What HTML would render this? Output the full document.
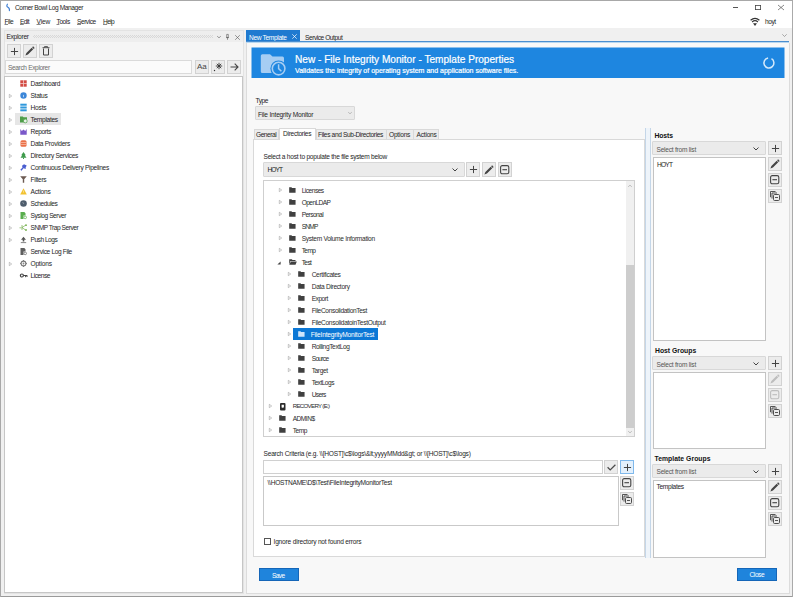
<!DOCTYPE html>
<html><head><meta charset="utf-8">
<style>
*{box-sizing:border-box;margin:0;padding:0}
html,body{width:793px;height:597px;overflow:hidden;background:#fff}
body{position:relative;font-family:"Liberation Sans",sans-serif;font-size:6.6px;letter-spacing:-0.3px;color:#1e1e1e}
.a{position:absolute}
.t{position:absolute;white-space:nowrap;line-height:12px;height:12px}
.btn{position:absolute;background:#ececec;border:1px solid #d2d2d2}
.box{position:absolute;background:#fff;border:1px solid #c9c9c9}
.combo{position:absolute;background:#ebebeb;border:1px solid #d8d8d8;border-radius:1px}
svg{position:absolute;overflow:visible}
</style></head><body>
<!-- window frame -->
<div class="a" style="left:0;top:0;width:793px;height:597px;border:1px solid #a8a8a8;border-right:1px solid #aaa"></div>
<!-- title -->
<svg style="left:0;top:0" width="14" height="14" viewBox="0 0 14 14"><path d="M7.4 4.2 Q6.2 6.2 7.6 7 Q9.9 8.2 9.4 10.6" fill="none" stroke="#3f7fd4" stroke-width="1.15" stroke-linecap="round"/></svg>
<div class="t" style="left:15.00px;top:2.35px;line-height:12px;letter-spacing:-0.391px">Corner Bowl Log Manager</div>
<!-- window controls -->
<div class="a" style="left:733px;top:7px;width:5px;height:1px;background:#555"></div>
<svg style="left:755px;top:5px" width="6" height="5" viewBox="0 0 6 5"><rect x="0.4" y="0.4" width="5.2" height="4.2" fill="none" stroke="#444" stroke-width="0.8"/></svg>
<svg style="left:778px;top:5px" width="6" height="6" viewBox="0 0 6 6"><path d="M0 0L6 5M6 0L0 5" stroke="#555" stroke-width="0.7"/></svg>
<!-- menu -->
<div class="t" style="left:4.50px;top:16.35px;letter-spacing:-0.465px"><u style="text-decoration-thickness:0.5px;text-underline-offset:0.4px;text-decoration-color:#888">F</u>ile</div>
<div class="t" style="left:20.00px;top:16.35px;letter-spacing:-0.633px"><u style="text-decoration-thickness:0.5px;text-underline-offset:0.4px;text-decoration-color:#888">E</u>dit</div>
<div class="t" style="left:36.50px;top:16.35px;letter-spacing:-0.135px"><u style="text-decoration-thickness:0.5px;text-underline-offset:0.4px;text-decoration-color:#888">V</u>iew</div>
<div class="t" style="left:56.50px;top:16.35px;letter-spacing:-0.425px"><u style="text-decoration-thickness:0.5px;text-underline-offset:0.4px;text-decoration-color:#888">T</u>ools</div>
<div class="t" style="left:77.00px;top:16.35px;letter-spacing:-0.467px"><u style="text-decoration-thickness:0.5px;text-underline-offset:0.4px;text-decoration-color:#888">S</u>ervice</div>
<div class="t" style="left:103.00px;top:16.35px;letter-spacing:-0.634px"><u style="text-decoration-thickness:0.5px;text-underline-offset:0.4px;text-decoration-color:#888">H</u>elp</div>
<!-- wifi -->
<svg style="left:750px;top:17px" width="10" height="9" viewBox="0 0 10 9"><path d="M0.6 3.3 Q5 -0.6 9.4 3.3" fill="none" stroke="#333" stroke-width="1.2"/><path d="M2.1 5 Q5 2.4 7.9 5" fill="none" stroke="#333" stroke-width="1.2"/><path d="M3 6.3 L7 6.3 L5 9Z" fill="#333"/></svg>
<div class="t" style="left:765.00px;top:16.35px;letter-spacing:-0.432px">hoyt</div>

<!-- app gray area -->
<div class="a" style="left:1px;top:28px;width:791px;height:568px;background:#f0f0f0"></div><div class="a" style="left:1px;top:596px;width:791px;height:1px;background:#9a9a9a"></div>

<!-- ===== Explorer panel ===== -->
<div class="a" style="left:4px;top:30px;width:240px;height:564px;background:#f5f5f5;border:1px solid #e3e3e3"></div>
<div class="a" style="left:5px;top:31px;width:238px;height:11px;background:#eeeeee"></div>
<div class="t" style="left:6.50px;top:30.95px;line-height:11px;height:11px;letter-spacing:-0.302px">Explorer</div>
<div class="a" style="left:33px;top:35px;width:180px;height:3px;background:repeating-conic-gradient(#d8d8d8 0 25%,transparent 0 50%) 0 0/2px 2px"></div>
<svg style="left:217px;top:36px" width="4" height="2" viewBox="0 0 4 2"><path d="M0.2 0.2 L2 1.8 L3.8 0.2" fill="none" stroke="#555" stroke-width="0.6"/></svg>
<svg style="left:226px;top:34px" width="3" height="6" viewBox="0 0 3 6"><path d="M0.7 0.4 H2.3 V3.5 H0.7Z M0 3.6 H3 M1.5 3.6 V5.8" fill="none" stroke="#555" stroke-width="0.6"/></svg>
<svg style="left:235px;top:34.5px" width="5" height="5" viewBox="0 0 5 5"><path d="M0.2 0.2L4.8 4.8M4.8 0.2L0.2 4.8" stroke="#555" stroke-width="0.6"/></svg>
<!-- toolbar buttons -->
<div class="btn" style="left:7.0px;top:44.0px;width:14.0px;height:14.0px;"></div><svg style="left:9.5px;top:46.5px" width="9" height="9" viewBox="0 0 9 9"><path d="M4.5 0.9V8.1M0.9 4.5H8.1" stroke="#444" stroke-width="1"/></svg>
<div class="btn" style="left:23.0px;top:44.0px;width:14.0px;height:14.0px;"></div><svg style="left:25.0px;top:46.0px" width="10" height="10" viewBox="0 0 10 10"><path d="M0.4 9.6 L1.39 7.05 L6.69 1.75 L8.25 3.31 L2.95 8.61 Z M7.12 1.32 L8.11 0.33 L9.67 1.89 L8.68 2.88 Z" fill="#444"/></svg>
<div class="btn" style="left:39px;top:44px;width:14px;height:14px"></div>
<svg style="left:42px;top:46px" width="8" height="10" viewBox="0 0 8 10"><path d="M0.5 1.7H7.5M2.5 1.5V0.6H5.5V1.5" fill="none" stroke="#444" stroke-width="0.9"/><path d="M1.5 2.5V9H6.5V2.5" fill="none" stroke="#444" stroke-width="1"/></svg>
<!-- search -->
<div class="box" style="left:5px;top:60px;width:187px;height:14px;border-color:#dadada;background:#fbfbfb"></div>
<div class="t" style="left:8.00px;top:62.40px;color:#6d6d6d;letter-spacing:-0.370px">Search Explorer</div>
<div class="btn" style="left:195px;top:60px;width:14px;height:14px"></div>
<div class="t" style="left:197px;top:61px;font-size:8px;letter-spacing:0;color:#444">Aa</div>
<div class="btn" style="left:211px;top:60px;width:14px;height:14px"></div>
<svg style="left:213px;top:62px" width="10" height="10" viewBox="0 0 10 10"><path d="M6 0.8V7.2M2.8 4H9.2M3.8 1.8L8.2 6.2M8.2 1.8L3.8 6.2" stroke="#333" stroke-width="0.9"/><circle cx="1.5" cy="8.5" r="0.7" fill="#333"/></svg>
<div class="btn" style="left:227px;top:60px;width:14px;height:14px"></div>
<svg style="left:230px;top:63px" width="9" height="8" viewBox="0 0 9 8"><path d="M0.5 4H8M4.7 0.7L8 4L4.7 7.3" fill="none" stroke="#444" stroke-width="1.1"/></svg>
<!-- explorer tree -->
<div class="box" style="left:4px;top:76px;width:239px;height:517px;border-color:#c6c6c6"></div>
<div class="a" style="left:15px;top:113px;width:46px;height:12px;background:#e6e6e6"></div>
<div class="t" style="left:30.50px;top:78.20px;letter-spacing:-0.300px">Dashboard</div><svg style="left:19.5px;top:80.0px" width="7" height="7" viewBox="0 0 7 7"><rect x="0.3" y="0.3" width="6.4" height="6.4" fill="#d24a43"/><path d="M3.5 0V7M0 3.5H7" stroke="#f3c9c6" stroke-width="0.8"/></svg><div class="t" style="left:30.50px;top:90.20px;letter-spacing:-0.300px">Status</div><svg style="left:9px;top:93.5px" width="3" height="4" viewBox="0 0 3 4"><path d="M0.3 0.3L2.7 2L0.3 3.7Z" fill="none" stroke="#999" stroke-width="0.55"/></svg><svg style="left:19.5px;top:92.0px" width="7" height="7" viewBox="0 0 7 7"><circle cx="3.5" cy="3.5" r="3.2" fill="#3c87d9"/><path d="M3.5 2.9V5.2" stroke="#cfe1f6" stroke-width="0.8"/></svg><div class="t" style="left:30.50px;top:102.20px;letter-spacing:-0.175px">Hosts</div><svg style="left:9px;top:105.5px" width="3" height="4" viewBox="0 0 3 4"><path d="M0.3 0.3L2.7 2L0.3 3.7Z" fill="none" stroke="#999" stroke-width="0.55"/></svg><svg style="left:19.5px;top:104.0px" width="7" height="7" viewBox="0 0 7 7"><rect x="0.3" y="-0.3" width="6.4" height="2" fill="#2f98dc"/><rect x="0.3" y="2.5" width="6.4" height="2" fill="#2f98dc"/><rect x="0.3" y="5.3" width="6.4" height="2" fill="#2f98dc"/></svg><div class="t" style="left:30.50px;top:114.20px;letter-spacing:-0.300px">Templates</div><svg style="left:9px;top:117.5px" width="3" height="4" viewBox="0 0 3 4"><path d="M0.3 0.3L2.7 2L0.3 3.7Z" fill="none" stroke="#999" stroke-width="0.55"/></svg><svg style="left:19.5px;top:116.0px" width="7" height="7" viewBox="0 0 7 7"><path d="M0 0.5H2.8L3.5 1.3H7V6.5H0Z" fill="#4f9e4a"/><circle cx="5.3" cy="5" r="1.9" fill="#e9f3e8" stroke="#4f9e4a" stroke-width="0.7"/></svg><div class="t" style="left:30.50px;top:126.20px;letter-spacing:-0.383px">Reports</div><svg style="left:9px;top:129.5px" width="3" height="4" viewBox="0 0 3 4"><path d="M0.3 0.3L2.7 2L0.3 3.7Z" fill="none" stroke="#999" stroke-width="0.55"/></svg><svg style="left:19.5px;top:128.0px" width="7" height="7" viewBox="0 0 7 7"><path d="M0.3 1V6.7H6.7V1L5.2 3L3.5 1.5L1.8 3Z" fill="#7a58c9"/></svg><div class="t" style="left:30.50px;top:138.20px;letter-spacing:-0.298px">Data Providers</div><svg style="left:9px;top:141.5px" width="3" height="4" viewBox="0 0 3 4"><path d="M0.3 0.3L2.7 2L0.3 3.7Z" fill="none" stroke="#999" stroke-width="0.55"/></svg><svg style="left:19.5px;top:140.0px" width="7" height="7" viewBox="0 0 7 7"><rect x="0.5" y="0.3" width="6" height="6.4" rx="1.5" fill="#ea7048"/><path d="M1 2.5H6M1 4.5H6" stroke="#fbd3c4" stroke-width="0.6"/></svg><div class="t" style="left:30.50px;top:150.20px;letter-spacing:-0.328px">Directory Services</div><svg style="left:9px;top:153.5px" width="3" height="4" viewBox="0 0 3 4"><path d="M0.3 0.3L2.7 2L0.3 3.7Z" fill="none" stroke="#999" stroke-width="0.55"/></svg><svg style="left:19.5px;top:152.0px" width="7" height="7" viewBox="0 0 7 7"><path d="M3.5 0L5.8 3.2H4.8L6.5 5.7H0.5L2.2 3.2H1.2Z" fill="#3f9b4c"/><rect x="3" y="5.5" width="1" height="1.5" fill="#3f9b4c"/></svg><div class="t" style="left:30.50px;top:162.20px;letter-spacing:-0.318px">Continuous Delivery Pipelines</div><svg style="left:9px;top:165.5px" width="3" height="4" viewBox="0 0 3 4"><path d="M0.3 0.3L2.7 2L0.3 3.7Z" fill="none" stroke="#999" stroke-width="0.55"/></svg><svg style="left:19.5px;top:164.0px" width="7" height="7" viewBox="0 0 7 7"><path d="M4 0.3L6.7 1.5L5.5 4L6 5L3.5 4.2L1.5 6.8L0.3 5.8L2.5 3.5L2 1.8Z" fill="#4a5ed0"/></svg><div class="t" style="left:30.50px;top:174.20px;letter-spacing:-0.299px">Filters</div><svg style="left:9px;top:177.5px" width="3" height="4" viewBox="0 0 3 4"><path d="M0.3 0.3L2.7 2L0.3 3.7Z" fill="none" stroke="#999" stroke-width="0.55"/></svg><svg style="left:19.5px;top:176.0px" width="7" height="7" viewBox="0 0 7 7"><path d="M0.2 0.3H6.8L4.2 3.3V6.8H2.8V3.3Z" fill="#6c5a52"/></svg><div class="t" style="left:30.50px;top:186.20px;letter-spacing:-0.217px">Actions</div><svg style="left:9px;top:189.5px" width="3" height="4" viewBox="0 0 3 4"><path d="M0.3 0.3L2.7 2L0.3 3.7Z" fill="none" stroke="#999" stroke-width="0.55"/></svg><svg style="left:19.5px;top:188.0px" width="7" height="7" viewBox="0 0 7 7"><path d="M3.5 0.3L6.8 6.6H0.2Z" fill="#f2c230"/><path d="M3.5 2.5V4.6" stroke="#fff4c8" stroke-width="0.6"/></svg><div class="t" style="left:30.50px;top:198.20px;letter-spacing:-0.425px">Schedules</div><svg style="left:9px;top:201.5px" width="3" height="4" viewBox="0 0 3 4"><path d="M0.3 0.3L2.7 2L0.3 3.7Z" fill="none" stroke="#999" stroke-width="0.55"/></svg><svg style="left:19.5px;top:200.0px" width="7" height="7" viewBox="0 0 7 7"><circle cx="3.5" cy="3.5" r="3.3" fill="#4e5d6c"/><path d="M2.8 2.3L3.7 3.7" stroke="#d8dde2" stroke-width="0.6"/></svg><div class="t" style="left:30.50px;top:210.20px;letter-spacing:-0.425px">Syslog Server</div><svg style="left:9px;top:213.5px" width="3" height="4" viewBox="0 0 3 4"><path d="M0.3 0.3L2.7 2L0.3 3.7Z" fill="none" stroke="#999" stroke-width="0.55"/></svg><svg style="left:19.5px;top:212.0px" width="7" height="7" viewBox="0 0 7 7"><path d="M0.5 0H4.3L5.5 1.2V3.6H0.5Z M0.5 3.5H3.5V7H0.5Z" fill="#5aae4e"/><circle cx="5.2" cy="5.4" r="1.3" fill="#fff" stroke="#5aae4e" stroke-width="0.7"/></svg><div class="t" style="left:30.50px;top:222.20px;letter-spacing:-0.468px">SNMP Trap Server</div><svg style="left:9px;top:225.5px" width="3" height="4" viewBox="0 0 3 4"><path d="M0.3 0.3L2.7 2L0.3 3.7Z" fill="none" stroke="#999" stroke-width="0.55"/></svg><svg style="left:19.5px;top:224.0px" width="7" height="7" viewBox="0 0 7 7"><path d="M-0.5 3.8H1.5M2 1V6M2 3.5L5.5 1.3M2 3.5L5.5 6" fill="none" stroke="#73ad4a" stroke-width="0.7"/><circle cx="6" cy="1.2" r="0.9" fill="#73ad4a"/><circle cx="6" cy="6" r="0.9" fill="#73ad4a"/></svg><div class="t" style="left:30.50px;top:234.20px;letter-spacing:-0.485px">Push Logs</div><svg style="left:9px;top:237.5px" width="3" height="4" viewBox="0 0 3 4"><path d="M0.3 0.3L2.7 2L0.3 3.7Z" fill="none" stroke="#999" stroke-width="0.55"/></svg><svg style="left:19.5px;top:236.0px" width="7" height="7" viewBox="0 0 7 7"><path d="M3.5 0.8L6 3.8H4.3V5.5H2.7V3.8H1Z" fill="#555"/><path d="M0.8 6.6H6.2" stroke="#555" stroke-width="0.7"/></svg><div class="t" style="left:30.50px;top:246.20px;letter-spacing:-0.367px">Service Log File</div><svg style="left:19.5px;top:248.0px" width="7" height="7" viewBox="0 0 7 7"><path d="M0.5 0H4.3L5.5 1.2V3.6H0.5Z M0.5 3.5H3.5V7H0.5Z" fill="#5f5f5f"/><circle cx="5.2" cy="5.4" r="1.3" fill="#fff" stroke="#5f5f5f" stroke-width="0.7"/></svg><div class="t" style="left:30.50px;top:258.20px;letter-spacing:-0.215px">Options</div><svg style="left:9px;top:261.5px" width="3" height="4" viewBox="0 0 3 4"><path d="M0.3 0.3L2.7 2L0.3 3.7Z" fill="none" stroke="#999" stroke-width="0.55"/></svg><svg style="left:19.5px;top:260.0px" width="7" height="7" viewBox="0 0 7 7"><circle cx="3.5" cy="3.5" r="2.4" fill="none" stroke="#777" stroke-width="1.1"/><circle cx="3.5" cy="3.5" r="0.9" fill="#888"/><path d="M3.5 0V1.2M3.5 5.8V7M0 3.5H1.2M5.8 3.5H7" stroke="#777" stroke-width="0.9"/></svg><div class="t" style="left:30.50px;top:270.20px;letter-spacing:-0.468px">License</div><svg style="left:19.5px;top:272.0px" width="7" height="7" viewBox="0 0 7 7"><circle cx="1.9" cy="3.5" r="1.5" fill="none" stroke="#444" stroke-width="1.2"/><path d="M3.4 3.5H7.2M5.6 3.5V5.2M7 3.5V5" stroke="#444" stroke-width="1" fill="none"/></svg>

<!-- ===== Document area ===== -->
<div class="a" style="left:246px;top:30px;width:54px;height:12px;background:#1f7ad0"></div>
<div class="t" style="left:249.00px;top:31.70px;color:#fff;line-height:12px;letter-spacing:-0.346px">New Template</div>
<svg style="left:292px;top:34px" width="5" height="5" viewBox="0 0 5 5"><path d="M0.3 0.3L4.7 4.7M4.7 0.3L0.3 4.7" stroke="#fff" stroke-width="0.7"/></svg>
<div class="t" style="left:305.00px;top:31.70px;line-height:12px;letter-spacing:-0.454px">Service Output</div>
<svg style="left:782px;top:34px" width="5" height="3" viewBox="0 0 5 3"><path d="M0.3 0.3 L2.5 2.5 L4.7 0.3" fill="none" stroke="#777" stroke-width="0.6"/></svg>
<div class="a" style="left:246px;top:41px;width:543px;height:1px;background:#4a8ed0"></div><div class="a" style="left:246px;top:42px;width:543px;height:1px;background:#b8d7f0"></div><div class="a" style="left:247px;top:43px;width:541px;height:2px;background:#f2f8fd"></div>
<div class="a" style="left:246px;top:43px;width:544px;height:551px;background:#f8f8f8;border:1px solid #dcdcdc;border-top:none"></div>
<!-- banner -->
<svg style="left:0;top:0" width="793" height="597"><rect x="251.5" y="47.5" width="533" height="30.5" fill="#1e86e0"/></svg>
<svg style="left:260px;top:53px" width="27" height="25" viewBox="0 0 27 25"><path d="M0.8 2.8 Q0.8 1.2 2.4 1.2 H10 L12.5 3.6 H22.5 Q24 3.6 24 5.2 V18.4 Q24 19.9 22.5 19.9 H2.3 Q0.8 19.9 0.8 18.4 Z" fill="#a6cdf3"/><circle cx="18.6" cy="15.6" r="8.2" fill="#1e86e0"/><circle cx="18.6" cy="15.6" r="6.3" fill="none" stroke="#a6cdf3" stroke-width="1.6"/><path d="M18.6 11.2V15.6L21.4 18.2" fill="none" stroke="#a6cdf3" stroke-width="1.5"/></svg>
<div class="t" style="left:295px;top:54px;font-size:10.1px;letter-spacing:0;color:#fff;-webkit-text-stroke:0.2px #fff;line-height:12px;height:12px">New - File Integrity Monitor - Template Properties</div>
<div class="t" style="left:295px;top:65px;font-size:7px;letter-spacing:0;color:#fff;-webkit-text-stroke:0.2px #fff;line-height:12px">Validates the integrity of operating system and application software files.</div>
<svg style="left:762.7px;top:57.3px" width="12" height="12" viewBox="0 0 12 12"><path d="M5.1 1.05 A5 5 0 1 0 8.5 1.7" fill="none" stroke="#d4e9fb" stroke-width="1.5"/></svg>

<!-- Type -->
<div class="t" style="left:255.50px;top:95.05px;letter-spacing:-0.468px">Type</div>
<div class="combo" style="left:255px;top:106px;width:100px;height:14px"></div>
<div class="t" style="left:258.00px;top:108.75px;letter-spacing:-0.204px">File Integrity Monitor</div>
<svg style="left:348px;top:112px" width="4" height="2" viewBox="0 0 4 2"><path d="M0.2 0.2L2 1.8L3.8 0.2" fill="none" stroke="#888" stroke-width="0.5"/></svg>

<!-- tabs -->
<div class="a" style="left:253px;top:139px;width:392px;height:418px;background:#fff;border:1px solid #d9d9d9"></div>
<div class="a" style="left:254px;top:129px;width:25px;height:11px;background:#ececec;border:1px solid #d9d9d9"></div>
<div class="t" style="left:256.00px;top:129.00px;line-height:11px;letter-spacing:-0.466px">General</div>
<div class="a" style="left:279px;top:128px;width:37px;height:12px;background:#fff;border:1px solid #d9d9d9;border-bottom:none"></div>
<div class="t" style="left:283.00px;top:128.00px;line-height:11px;letter-spacing:-0.300px">Directories</div>
<div class="a" style="left:316px;top:129px;width:71px;height:11px;background:#ececec;border:1px solid #d9d9d9"></div>
<div class="t" style="left:318.00px;top:129.00px;line-height:11px;letter-spacing:-0.361px">Files and Sub-Directories</div>
<div class="a" style="left:386px;top:129px;width:28px;height:11px;background:#ececec;border:1px solid #d9d9d9"></div>
<div class="t" style="left:389.00px;top:129.00px;line-height:11px;letter-spacing:-0.218px">Options</div>
<div class="a" style="left:413px;top:129px;width:26px;height:11px;background:#ececec;border:1px solid #d9d9d9"></div>
<div class="t" style="left:416.50px;top:129.00px;line-height:11px;letter-spacing:-0.216px">Actions</div>

<div class="t" style="left:263.50px;top:151.00px;letter-spacing:-0.257px">Select a host to populate the file system below</div>
<div class="combo" style="left:263px;top:162px;width:202px;height:14.5px"></div>
<div class="t" style="left:267.50px;top:164.35px;letter-spacing:-0.966px">HOYT</div>
<svg style="left:451.5px;top:168px" width="6" height="4" viewBox="0 0 6 4"><path d="M0.5 0.5L3 3L5.5 0.5" fill="none" stroke="#444" stroke-width="1"/></svg>
<div class="btn" style="left:466.0px;top:162.0px;width:14.0px;height:15.0px;"></div><svg style="left:468.5px;top:165.0px" width="9" height="9" viewBox="0 0 9 9"><path d="M4.5 0.9V8.1M0.9 4.5H8.1" stroke="#444" stroke-width="1"/></svg>
<div class="btn" style="left:482.0px;top:162.0px;width:14.0px;height:15.0px;"></div><svg style="left:484.0px;top:164.5px" width="10" height="10" viewBox="0 0 10 10"><path d="M0.4 9.6 L1.39 7.05 L6.69 1.75 L8.25 3.31 L2.95 8.61 Z M7.12 1.32 L8.11 0.33 L9.67 1.89 L8.68 2.88 Z" fill="#444"/></svg>
<div class="btn" style="left:498.0px;top:162.0px;width:14.0px;height:15.0px;"></div><svg style="left:500.3px;top:164.8px" width="9.4" height="9.4" viewBox="0 0 9.4 9.4"><rect x="0.6" y="0.6" width="8.2" height="8.2" rx="1.6" fill="none" stroke="#444" stroke-width="1.1"/><path d="M2.4 4.7H7" stroke="#444" stroke-width="1.1"/></svg>

<!-- directory tree -->
<div class="box" style="left:263px;top:180px;width:372px;height:257px;border-color:#cfcfcf"></div>
<div class="a" style="left:626px;top:181px;width:8px;height:255px;background:#f0f0f0"></div>
<div class="a" style="left:626px;top:265px;width:8px;height:163px;background:#cdcdcd"></div>
<svg style="left:628px;top:185px" width="4" height="2" viewBox="0 0 4 2"><path d="M0.2 1.8L2 0.2L3.8 1.8" fill="none" stroke="#888" stroke-width="0.5"/></svg>
<svg style="left:628px;top:431px" width="4" height="2" viewBox="0 0 4 2"><path d="M0.2 0.2L2 1.8L3.8 0.2" fill="none" stroke="#888" stroke-width="0.5"/></svg>
<div class="a" style="left:293px;top:328px;width:85px;height:12px;background:#0c78d6"></div>
<div class="t" style="left:301.70px;top:185.10px;color:#2b2b2b;letter-spacing:-0.515px">Licenses</div><svg style="left:278.5px;top:188.4px" width="3" height="4" viewBox="0 0 3 4"><path d="M0.3 0.3L2.7 2L0.3 3.7Z" fill="none" stroke="#999" stroke-width="0.55"/></svg><svg style="left:288.7px;top:187.4px" width="7" height="6" viewBox="0 0 8 6" preserveAspectRatio="none"><path d="M0.2 0.2H2.8L3.5 0.9H7.5V5.8H0.2Z" fill="#404040"/></svg><div class="t" style="left:301.70px;top:197.10px;color:#2b2b2b;letter-spacing:-0.587px">OpenLDAP</div><svg style="left:278.5px;top:200.4px" width="3" height="4" viewBox="0 0 3 4"><path d="M0.3 0.3L2.7 2L0.3 3.7Z" fill="none" stroke="#999" stroke-width="0.55"/></svg><svg style="left:288.7px;top:199.4px" width="7" height="6" viewBox="0 0 8 6" preserveAspectRatio="none"><path d="M0.2 0.2H2.8L3.5 0.9H7.5V5.8H0.2Z" fill="#404040"/></svg><div class="t" style="left:301.70px;top:209.10px;color:#2b2b2b;letter-spacing:-0.587px">Personal</div><svg style="left:278.5px;top:212.4px" width="3" height="4" viewBox="0 0 3 4"><path d="M0.3 0.3L2.7 2L0.3 3.7Z" fill="none" stroke="#999" stroke-width="0.55"/></svg><svg style="left:288.7px;top:211.4px" width="7" height="6" viewBox="0 0 8 6" preserveAspectRatio="none"><path d="M0.2 0.2H2.8L3.5 0.9H7.5V5.8H0.2Z" fill="#404040"/></svg><div class="t" style="left:301.70px;top:221.10px;color:#2b2b2b;letter-spacing:-0.799px">SNMP</div><svg style="left:278.5px;top:224.4px" width="3" height="4" viewBox="0 0 3 4"><path d="M0.3 0.3L2.7 2L0.3 3.7Z" fill="none" stroke="#999" stroke-width="0.55"/></svg><svg style="left:288.7px;top:223.4px" width="7" height="6" viewBox="0 0 8 6" preserveAspectRatio="none"><path d="M0.2 0.2H2.8L3.5 0.9H7.5V5.8H0.2Z" fill="#404040"/></svg><div class="t" style="left:301.70px;top:233.10px;color:#2b2b2b;letter-spacing:-0.300px">System Volume Information</div><svg style="left:278.5px;top:236.4px" width="3" height="4" viewBox="0 0 3 4"><path d="M0.3 0.3L2.7 2L0.3 3.7Z" fill="none" stroke="#999" stroke-width="0.55"/></svg><svg style="left:288.7px;top:235.4px" width="7" height="6" viewBox="0 0 8 6" preserveAspectRatio="none"><path d="M0.2 0.2H2.8L3.5 0.9H7.5V5.8H0.2Z" fill="#404040"/></svg><div class="t" style="left:301.70px;top:245.10px;color:#2b2b2b;letter-spacing:-0.633px">Temp</div><svg style="left:278.5px;top:248.4px" width="3" height="4" viewBox="0 0 3 4"><path d="M0.3 0.3L2.7 2L0.3 3.7Z" fill="none" stroke="#999" stroke-width="0.55"/></svg><svg style="left:288.7px;top:247.4px" width="7" height="6" viewBox="0 0 8 6" preserveAspectRatio="none"><path d="M0.2 0.2H2.8L3.5 0.9H7.5V5.8H0.2Z" fill="#404040"/></svg><div class="t" style="left:301.70px;top:257.10px;color:#2b2b2b;letter-spacing:-0.633px">Test</div><svg style="left:276.7px;top:260.9px" width="4" height="4" viewBox="0 0 4 4"><path d="M3.6 0.4V3.6H0.4Z" fill="#444"/></svg><svg style="left:288.7px;top:259.4px" width="8" height="6" viewBox="0 0 8 6"><path d="M0.2 0.3H2.8L3.5 1H6.5V2H1.5L0.2 5.7Z" fill="#404040"/><path d="M1.8 2.4H7.8L6.5 5.7H0.3Z" fill="#404040"/></svg><div class="t" style="left:311.70px;top:269.10px;color:#2b2b2b;letter-spacing:-0.346px">Certificates</div><svg style="left:288.0px;top:272.4px" width="3" height="4" viewBox="0 0 3 4"><path d="M0.3 0.3L2.7 2L0.3 3.7Z" fill="none" stroke="#999" stroke-width="0.55"/></svg><svg style="left:298.2px;top:271.4px" width="7" height="6" viewBox="0 0 8 6" preserveAspectRatio="none"><path d="M0.2 0.2H2.8L3.5 0.9H7.5V5.8H0.2Z" fill="#404040"/></svg><div class="t" style="left:311.70px;top:281.10px;color:#2b2b2b;letter-spacing:-0.298px">Data Directory</div><svg style="left:288.0px;top:284.4px" width="3" height="4" viewBox="0 0 3 4"><path d="M0.3 0.3L2.7 2L0.3 3.7Z" fill="none" stroke="#999" stroke-width="0.55"/></svg><svg style="left:298.2px;top:283.4px" width="7" height="6" viewBox="0 0 8 6" preserveAspectRatio="none"><path d="M0.2 0.2H2.8L3.5 0.9H7.5V5.8H0.2Z" fill="#404040"/></svg><div class="t" style="left:311.70px;top:293.10px;color:#2b2b2b;letter-spacing:-0.500px">Export</div><svg style="left:288.0px;top:296.4px" width="3" height="4" viewBox="0 0 3 4"><path d="M0.3 0.3L2.7 2L0.3 3.7Z" fill="none" stroke="#999" stroke-width="0.55"/></svg><svg style="left:298.2px;top:295.4px" width="7" height="6" viewBox="0 0 8 6" preserveAspectRatio="none"><path d="M0.2 0.2H2.8L3.5 0.9H7.5V5.8H0.2Z" fill="#404040"/></svg><div class="t" style="left:311.70px;top:305.10px;color:#2b2b2b;letter-spacing:-0.350px">FileConsolidationTest</div><svg style="left:288.0px;top:308.4px" width="3" height="4" viewBox="0 0 3 4"><path d="M0.3 0.3L2.7 2L0.3 3.7Z" fill="none" stroke="#999" stroke-width="0.55"/></svg><svg style="left:298.2px;top:307.4px" width="7" height="6" viewBox="0 0 8 6" preserveAspectRatio="none"><path d="M0.2 0.2H2.8L3.5 0.9H7.5V5.8H0.2Z" fill="#404040"/></svg><div class="t" style="left:311.70px;top:317.10px;color:#2b2b2b;letter-spacing:-0.318px">FileConsolidatoinTestOutput</div><svg style="left:288.0px;top:320.4px" width="3" height="4" viewBox="0 0 3 4"><path d="M0.3 0.3L2.7 2L0.3 3.7Z" fill="none" stroke="#999" stroke-width="0.55"/></svg><svg style="left:298.2px;top:319.4px" width="7" height="6" viewBox="0 0 8 6" preserveAspectRatio="none"><path d="M0.2 0.2H2.8L3.5 0.9H7.5V5.8H0.2Z" fill="#404040"/></svg><div class="t" style="left:310.70px;top:329.10px;color:#fff;letter-spacing:-0.191px">FileIntegrityMonitorTest</div><svg style="left:288.0px;top:332.4px" width="3" height="4" viewBox="0 0 3 4"><path d="M0.3 0.3L2.7 2L0.3 3.7Z" fill="none" stroke="#999" stroke-width="0.55"/></svg><svg style="left:298.2px;top:331.4px" width="7" height="6" viewBox="0 0 8 6" preserveAspectRatio="none"><path d="M0.2 0.2H2.8L3.5 0.9H7.5V5.8H0.2Z" fill="#cfe5fb"/></svg><div class="t" style="left:311.70px;top:341.10px;color:#2b2b2b;letter-spacing:-0.379px">RollingTextLog</div><svg style="left:288.0px;top:344.4px" width="3" height="4" viewBox="0 0 3 4"><path d="M0.3 0.3L2.7 2L0.3 3.7Z" fill="none" stroke="#999" stroke-width="0.55"/></svg><svg style="left:298.2px;top:343.4px" width="7" height="6" viewBox="0 0 8 6" preserveAspectRatio="none"><path d="M0.2 0.2H2.8L3.5 0.9H7.5V5.8H0.2Z" fill="#404040"/></svg><div class="t" style="left:311.70px;top:353.10px;color:#2b2b2b;letter-spacing:-0.700px">Source</div><svg style="left:288.0px;top:356.4px" width="3" height="4" viewBox="0 0 3 4"><path d="M0.3 0.3L2.7 2L0.3 3.7Z" fill="none" stroke="#999" stroke-width="0.55"/></svg><svg style="left:298.2px;top:355.4px" width="7" height="6" viewBox="0 0 8 6" preserveAspectRatio="none"><path d="M0.2 0.2H2.8L3.5 0.9H7.5V5.8H0.2Z" fill="#404040"/></svg><div class="t" style="left:311.70px;top:365.10px;color:#2b2b2b;letter-spacing:-0.400px">Target</div><svg style="left:288.0px;top:368.4px" width="3" height="4" viewBox="0 0 3 4"><path d="M0.3 0.3L2.7 2L0.3 3.7Z" fill="none" stroke="#999" stroke-width="0.55"/></svg><svg style="left:298.2px;top:367.4px" width="7" height="6" viewBox="0 0 8 6" preserveAspectRatio="none"><path d="M0.2 0.2H2.8L3.5 0.9H7.5V5.8H0.2Z" fill="#404040"/></svg><div class="t" style="left:311.70px;top:377.10px;color:#2b2b2b;letter-spacing:-0.515px">TextLogs</div><svg style="left:288.0px;top:380.4px" width="3" height="4" viewBox="0 0 3 4"><path d="M0.3 0.3L2.7 2L0.3 3.7Z" fill="none" stroke="#999" stroke-width="0.55"/></svg><svg style="left:298.2px;top:379.4px" width="7" height="6" viewBox="0 0 8 6" preserveAspectRatio="none"><path d="M0.2 0.2H2.8L3.5 0.9H7.5V5.8H0.2Z" fill="#404040"/></svg><div class="t" style="left:311.70px;top:389.10px;color:#2b2b2b;letter-spacing:-0.675px">Users</div><svg style="left:288.0px;top:392.4px" width="3" height="4" viewBox="0 0 3 4"><path d="M0.3 0.3L2.7 2L0.3 3.7Z" fill="none" stroke="#999" stroke-width="0.55"/></svg><svg style="left:298.2px;top:391.4px" width="7" height="6" viewBox="0 0 8 6" preserveAspectRatio="none"><path d="M0.2 0.2H2.8L3.5 0.9H7.5V5.8H0.2Z" fill="#404040"/></svg><div class="t" style="left:292.70px;top:400.40px;color:#2b2b2b;font-size:6.1px;letter-spacing:-0.674px">RECOVERY (E:)</div><svg style="left:269.0px;top:404.4px" width="3" height="4" viewBox="0 0 3 4"><path d="M0.3 0.3L2.7 2L0.3 3.7Z" fill="none" stroke="#999" stroke-width="0.55"/></svg><svg style="left:280.0px;top:402.59999999999997px" width="5.5" height="7.5" viewBox="0 0 5.5 7.5"><rect x="0" y="0" width="5.5" height="7.5" rx="1" fill="#2a2a2a"/><path d="M1.6 1.8H3.9V4.5H3L2.4 5.3V4.5H1.6Z" fill="#fff"/></svg><div class="t" style="left:292.70px;top:413.10px;color:#2b2b2b;letter-spacing:-0.500px">ADMIN$</div><svg style="left:269.0px;top:416.4px" width="3" height="4" viewBox="0 0 3 4"><path d="M0.3 0.3L2.7 2L0.3 3.7Z" fill="none" stroke="#999" stroke-width="0.55"/></svg><svg style="left:279.2px;top:415.4px" width="7" height="6" viewBox="0 0 8 6" preserveAspectRatio="none"><path d="M0.2 0.2H2.8L3.5 0.9H7.5V5.8H0.2Z" fill="#404040"/></svg><div class="t" style="left:292.70px;top:425.10px;color:#2b2b2b;letter-spacing:-0.467px">Temp</div><svg style="left:269.0px;top:428.4px" width="3" height="4" viewBox="0 0 3 4"><path d="M0.3 0.3L2.7 2L0.3 3.7Z" fill="none" stroke="#999" stroke-width="0.55"/></svg><svg style="left:279.2px;top:427.4px" width="7" height="6" viewBox="0 0 8 6" preserveAspectRatio="none"><path d="M0.2 0.2H2.8L3.5 0.9H7.5V5.8H0.2Z" fill="#404040"/></svg>

<!-- search criteria -->
<div class="t" style="left:263.50px;top:448.05px;letter-spacing:-0.220px">Search Criteria (e.g. \\[HOST]\c$\logs\&amp;lt;yyyyMMdd&amp;gt; or \\[HOST]\c$\logs)</div>
<div class="box" style="left:263px;top:460px;width:340px;height:14px;border-color:#d0d0d0"></div>
<div class="btn" style="left:604px;top:460px;width:14px;height:14px"></div>
<svg style="left:606.5px;top:463.5px" width="9" height="7" viewBox="0 0 9 7"><path d="M0.6 3.3L3.2 5.9L8.4 0.7" fill="none" stroke="#4a4a4a" stroke-width="1.25"/></svg>
<div class="btn" style="left:620.0px;top:460.0px;width:14.0px;height:14.0px;background:#e3f0fc;border-color:#80b9ec;"></div><svg style="left:622.5px;top:462.5px" width="9" height="9" viewBox="0 0 9 9"><path d="M4.5 0.9V8.1M0.9 4.5H8.1" stroke="#444" stroke-width="1"/></svg>
<div class="box" style="left:263px;top:476px;width:356px;height:50px;border-color:#c9c9c9"></div>
<div class="t" style="left:267.50px;top:477.35px;letter-spacing:-0.251px">\\HOSTNAME\D$\Test\FileIntegrityMonitorTest</div>
<div class="btn" style="left:620px;top:476px;width:14px;height:14px"></div>
<div class="btn" style="left:620.0px;top:476.0px;width:14.0px;height:14.0px;"></div><svg style="left:622.3px;top:478.3px" width="9.4" height="9.4" viewBox="0 0 9.4 9.4"><rect x="0.6" y="0.6" width="8.2" height="8.2" rx="1.6" fill="none" stroke="#444" stroke-width="1.1"/><path d="M2.4 4.7H7" stroke="#444" stroke-width="1.1"/></svg>
<div class="btn" style="left:620.0px;top:492.0px;width:14.0px;height:14.0px;"></div><svg style="left:622.0px;top:494.0px" width="10" height="10" viewBox="0 0 10 10"><path d="M0.5 6.2V0.5H5.5M2 7.6V2H7" fill="none" stroke="#444" stroke-width="0.9"/><rect x="3.5" y="3.5" width="6" height="6" rx="1.1" fill="#ececec" stroke="#444" stroke-width="0.95"/><path d="M5 6.5H8" stroke="#444" stroke-width="0.9"/></svg>
<!-- checkbox -->
<div class="a" style="left:264px;top:538px;width:7px;height:7px;background:#fff;border:1px solid #555"></div>
<div class="t" style="left:273.50px;top:536.00px;letter-spacing:-0.192px">Ignore directory not found errors</div>

<!-- splitter -->
<div class="a" style="left:645px;top:128px;width:6px;height:430px;background:#eef4fa;border-left:1px solid #c4d6e8;border-right:1px solid #c4d6e8"></div>

<!-- right panel -->
<div class="t" style="left:654.50px;top:130.05px;font-weight:bold;font-size:6.8px;letter-spacing:-0.100px;color:#111">Hosts</div><div class="combo" style="left:652px;top:141px;width:114px;height:14px"></div><div class="t" style="left:656.50px;top:143.70px;color:#555;letter-spacing:-0.234px">Select from list</div><svg style="left:753px;top:147px" width="6" height="4" viewBox="0 0 6 4"><path d="M0.5 0.5L3 3L5.5 0.5" fill="none" stroke="#444" stroke-width="1"/></svg><div class="box" style="left:653px;top:157px;width:113px;height:184px;border-color:#c3c3c3"></div><div class="t" style="left:657.00px;top:159.05px;letter-spacing:-0.801px">HOYT</div><div class="btn" style="left:768px;top:141px;width:14px;height:14px;"></div><svg style="left:770.5px;top:143.5px" width="9" height="9" viewBox="0 0 9 9"><path d="M4.5 0.9V8.1M0.9 4.5H8.1" stroke="#444" stroke-width="1"/></svg><div class="btn" style="left:768px;top:157px;width:14px;height:14px;"></div><svg style="left:770.0px;top:159.0px" width="10" height="10" viewBox="0 0 10 10"><path d="M0.4 9.6 L1.39 7.05 L6.69 1.75 L8.25 3.31 L2.95 8.61 Z M7.12 1.32 L8.11 0.33 L9.67 1.89 L8.68 2.88 Z" fill="#444"/></svg><div class="btn" style="left:768px;top:173px;width:14px;height:14px;"></div><svg style="left:770.3px;top:175.3px" width="9.4" height="9.4" viewBox="0 0 9.4 9.4"><rect x="0.6" y="0.6" width="8.2" height="8.2" rx="1.6" fill="none" stroke="#444" stroke-width="1.1"/><path d="M2.4 4.7H7" stroke="#444" stroke-width="1.1"/></svg><div class="btn" style="left:768px;top:189px;width:14px;height:14px;"></div><svg style="left:770.0px;top:191.0px" width="10" height="10" viewBox="0 0 10 10"><path d="M0.5 6.2V0.5H5.5M2 7.6V2H7" fill="none" stroke="#444" stroke-width="0.9"/><rect x="3.5" y="3.5" width="6" height="6" rx="1.1" fill="#ececec" stroke="#444" stroke-width="0.95"/><path d="M5 6.5H8" stroke="#444" stroke-width="0.9"/></svg><div class="t" style="left:655.00px;top:345.20px;font-weight:bold;font-size:6.8px;letter-spacing:0.000px;color:#111">Host Groups</div><div class="combo" style="left:652px;top:356px;width:114px;height:14px"></div><div class="t" style="left:656.50px;top:358.70px;color:#555;letter-spacing:-0.234px">Select from list</div><svg style="left:753px;top:362px" width="6" height="4" viewBox="0 0 6 4"><path d="M0.5 0.5L3 3L5.5 0.5" fill="none" stroke="#444" stroke-width="1"/></svg><div class="box" style="left:653px;top:372px;width:113px;height:76.5px;border-color:#c3c3c3"></div><div class="btn" style="left:768px;top:356px;width:14px;height:14px;"></div><svg style="left:770.5px;top:358.5px" width="9" height="9" viewBox="0 0 9 9"><path d="M4.5 0.9V8.1M0.9 4.5H8.1" stroke="#444" stroke-width="1"/></svg><div class="btn" style="left:768px;top:372px;width:14px;height:14px;"></div><svg style="left:770.0px;top:374.0px" width="10" height="10" viewBox="0 0 10 10"><path d="M0.4 9.6 L1.39 7.05 L6.69 1.75 L8.25 3.31 L2.95 8.61 Z M7.12 1.32 L8.11 0.33 L9.67 1.89 L8.68 2.88 Z" fill="#bdbdbd"/></svg><div class="btn" style="left:768px;top:388px;width:14px;height:14px;"></div><svg style="left:770.3px;top:390.3px" width="9.4" height="9.4" viewBox="0 0 9.4 9.4"><rect x="0.6" y="0.6" width="8.2" height="8.2" rx="1.6" fill="none" stroke="#bdbdbd" stroke-width="1.1"/><path d="M2.4 4.7H7" stroke="#bdbdbd" stroke-width="1.1"/></svg><div class="btn" style="left:768px;top:404px;width:14px;height:14px;"></div><svg style="left:770.0px;top:406.0px" width="10" height="10" viewBox="0 0 10 10"><path d="M0.5 6.2V0.5H5.5M2 7.6V2H7" fill="none" stroke="#444" stroke-width="0.9"/><rect x="3.5" y="3.5" width="6" height="6" rx="1.1" fill="#ececec" stroke="#444" stroke-width="0.95"/><path d="M5 6.5H8" stroke="#444" stroke-width="0.9"/></svg><div class="t" style="left:654.50px;top:452.55px;font-weight:bold;font-size:6.8px;letter-spacing:0.044px;color:#111">Template Groups</div><div class="combo" style="left:652px;top:464px;width:114px;height:14px"></div><div class="t" style="left:656.50px;top:466.00px;color:#555;letter-spacing:-0.234px">Select from list</div><svg style="left:753px;top:470px" width="6" height="4" viewBox="0 0 6 4"><path d="M0.5 0.5L3 3L5.5 0.5" fill="none" stroke="#444" stroke-width="1"/></svg><div class="box" style="left:653px;top:480px;width:113px;height:77.5px;border-color:#c3c3c3"></div><div class="t" style="left:656.50px;top:481.35px;letter-spacing:-0.300px">Templates</div><div class="btn" style="left:768px;top:464px;width:14px;height:14px;"></div><svg style="left:770.5px;top:466.5px" width="9" height="9" viewBox="0 0 9 9"><path d="M4.5 0.9V8.1M0.9 4.5H8.1" stroke="#444" stroke-width="1"/></svg><div class="btn" style="left:768px;top:480px;width:14px;height:14px;"></div><svg style="left:770.0px;top:482.0px" width="10" height="10" viewBox="0 0 10 10"><path d="M0.4 9.6 L1.39 7.05 L6.69 1.75 L8.25 3.31 L2.95 8.61 Z M7.12 1.32 L8.11 0.33 L9.67 1.89 L8.68 2.88 Z" fill="#444"/></svg><div class="btn" style="left:768px;top:496px;width:14px;height:14px;"></div><svg style="left:770.3px;top:498.3px" width="9.4" height="9.4" viewBox="0 0 9.4 9.4"><rect x="0.6" y="0.6" width="8.2" height="8.2" rx="1.6" fill="none" stroke="#444" stroke-width="1.1"/><path d="M2.4 4.7H7" stroke="#444" stroke-width="1.1"/></svg><div class="btn" style="left:768px;top:512px;width:14px;height:14px;"></div><svg style="left:770.0px;top:514.0px" width="10" height="10" viewBox="0 0 10 10"><path d="M0.5 6.2V0.5H5.5M2 7.6V2H7" fill="none" stroke="#444" stroke-width="0.9"/><rect x="3.5" y="3.5" width="6" height="6" rx="1.1" fill="#ececec" stroke="#444" stroke-width="0.95"/><path d="M5 6.5H8" stroke="#444" stroke-width="0.9"/></svg>

<!-- buttons -->
<div class="a" style="left:259px;top:568px;width:40px;height:13px;background:#1f84dc;border:1px solid #1566b8"></div>
<div class="t" style="left:272.00px;top:569.70px;color:#fff;line-height:11px;letter-spacing:-0.633px">Save</div>
<div class="a" style="left:737px;top:568px;width:40px;height:13px;background:#1f84dc;border:1px solid #1566b8"></div>
<div class="t" style="left:749.50px;top:569.35px;color:#fff;line-height:11px;letter-spacing:-0.425px">Close</div>


</body></html>
